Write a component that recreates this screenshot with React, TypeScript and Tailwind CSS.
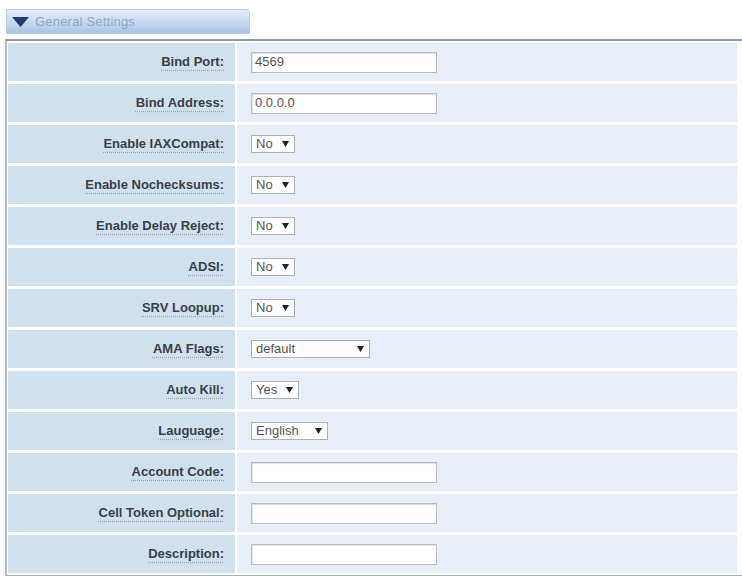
import React from 'react';

type Field =
  | { label: string; kind: 'input'; value: string }
  | { label: string; kind: 'select'; value: string; width: string };

const fields: Field[] = [
  { label: 'Bind Port:', kind: 'input', value: '4569' },
  { label: 'Bind Address:', kind: 'input', value: '0.0.0.0' },
  { label: 'Enable IAXCompat:', kind: 'select', value: 'No', width: 'w-[44px]' },
  { label: 'Enable Nochecksums:', kind: 'select', value: 'No', width: 'w-[44px]' },
  { label: 'Enable Delay Reject:', kind: 'select', value: 'No', width: 'w-[44px]' },
  { label: 'ADSI:', kind: 'select', value: 'No', width: 'w-[44px]' },
  { label: 'SRV Loopup:', kind: 'select', value: 'No', width: 'w-[44px]' },
  { label: 'AMA Flags:', kind: 'select', value: 'default', width: 'w-[119px]' },
  { label: 'Auto Kill:', kind: 'select', value: 'Yes', width: 'w-[48px]' },
  { label: 'Lauguage:', kind: 'select', value: 'English', width: 'w-[77px]' },
  { label: 'Account Code:', kind: 'input', value: '' },
  { label: 'Cell Token Optional:', kind: 'input', value: '' },
  { label: 'Description:', kind: 'input', value: '' },
];

export default function App() {
  return (
    <div className="min-h-screen bg-white font-['Liberation_Sans',Arial,sans-serif]">
      {/* tab header */}
      <div className="ml-[6px] pt-[9px]">
        <div className="flex h-[25px] w-[244px] items-center gap-[6px] rounded-tr-[4px] border border-[#b7c9df] bg-gradient-to-b from-[#e4edf8] via-[#c9daef] to-[#a9c3e4] pl-[5px]">
          <svg width="17" height="10" viewBox="0 0 17 10">
            <polygon points="0,0 17,0 8.5,10" fill="#1d3c78" />
          </svg>
          <span className="text-[13px] tracking-[0.2px] text-[#8fa6cc]">General Settings</span>
        </div>
      </div>

      {/* settings table */}
      <div className="ml-[5px] mt-[5px] flex w-[737px] flex-col gap-[3px] border-t-2 border-b-2 border-l-2 border-t-[#8d9aa5] border-b-[#a9b2b9] border-l-[#b4bcc3] py-[2px] pl-[1px] pr-[5px]">
        {fields.map((f) => (
          <div key={f.label} className="flex h-[38px] gap-[2px]">
            <div className="flex w-[227px] items-center justify-end bg-[#d1e0ed] pr-[11px]">
              <span className="text-[13px] font-bold text-[#3a3f47] underline decoration-[#9aa5b0] decoration-dotted underline-offset-[4px]">
                {f.label}
              </span>
            </div>
            <div className="flex flex-1 items-center bg-[#e8eef7] pl-[14px]">
              {f.kind === 'input' ? (
                <div className="flex h-[21px] w-[186px] items-center border border-[#b9bcc0] bg-white pl-[3px] text-[13px] text-[#555] shadow-[inset_1px_1px_1px_rgba(0,0,0,0.12)]">
                  {f.value}
                </div>
              ) : (
                <div
                  className={`flex h-[18px] ${f.width} items-center justify-between border border-[#aeb2b6] bg-white pl-[4px] pr-[5px] text-[13px] text-[#555]`}
                >
                  <span>{f.value}</span>
                  <svg width="7" height="6" viewBox="0 0 7 6">
                    <polygon points="0,0 7,0 3.5,6" fill="#222" />
                  </svg>
                </div>
              )}
            </div>
          </div>
        ))}
      </div>
    </div>
  );
}
